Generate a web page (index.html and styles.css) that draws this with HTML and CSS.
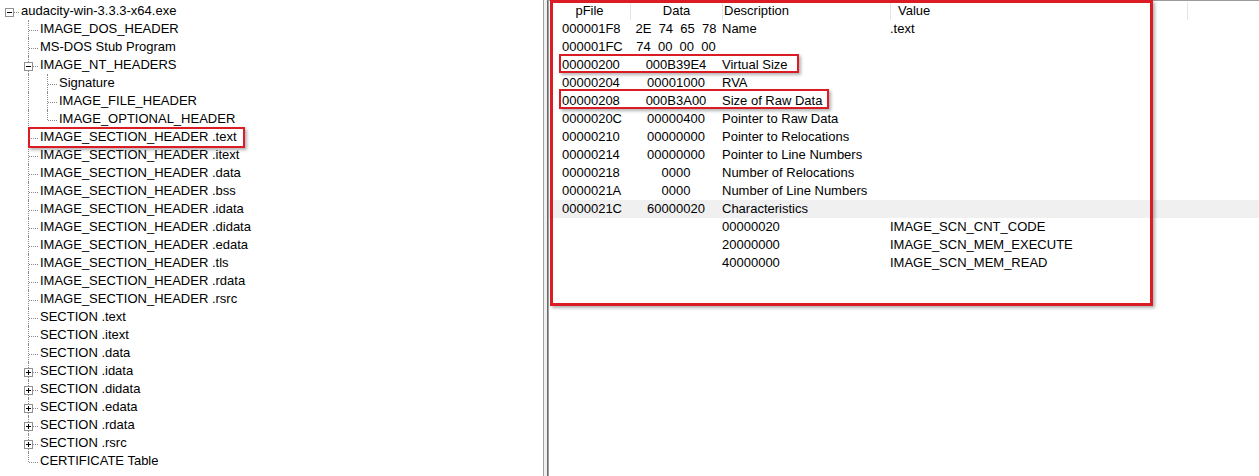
FILE: index.html
```html
<!DOCTYPE html>
<html>
<head>
<meta charset="utf-8">
<link rel="stylesheet" href="styles.css">
</head>
<body>
<div class="app">
  <div class="tree-pane">
    <div class="tree">
      <div class="row"><span class="conn root"><span class="box"></span></span><span class="label">audacity-win-3.3.3-x64.exe</span></div>
      <div class="row"><span class="ind"></span><span class="conn"></span><span class="label">IMAGE_DOS_HEADER</span></div>
      <div class="row"><span class="ind"></span><span class="conn"></span><span class="label">MS-DOS Stub Program</span></div>
      <div class="row"><span class="ind"></span><span class="conn"><span class="box"></span></span><span class="label">IMAGE_NT_HEADERS</span></div>
      <div class="row"><span class="ind"></span><span class="ind v"></span><span class="conn"></span><span class="label">Signature</span></div>
      <div class="row"><span class="ind"></span><span class="ind v"></span><span class="conn"></span><span class="label">IMAGE_FILE_HEADER</span></div>
      <div class="row"><span class="ind"></span><span class="ind v"></span><span class="conn last"></span><span class="label">IMAGE_OPTIONAL_HEADER</span></div>
      <div class="row"><span class="ind"></span><span class="conn"></span><span class="label">IMAGE_SECTION_HEADER .text</span></div>
      <div class="row"><span class="ind"></span><span class="conn"></span><span class="label">IMAGE_SECTION_HEADER .itext</span></div>
      <div class="row"><span class="ind"></span><span class="conn"></span><span class="label">IMAGE_SECTION_HEADER .data</span></div>
      <div class="row"><span class="ind"></span><span class="conn"></span><span class="label">IMAGE_SECTION_HEADER .bss</span></div>
      <div class="row"><span class="ind"></span><span class="conn"></span><span class="label">IMAGE_SECTION_HEADER .idata</span></div>
      <div class="row"><span class="ind"></span><span class="conn"></span><span class="label">IMAGE_SECTION_HEADER .didata</span></div>
      <div class="row"><span class="ind"></span><span class="conn"></span><span class="label">IMAGE_SECTION_HEADER .edata</span></div>
      <div class="row"><span class="ind"></span><span class="conn"></span><span class="label">IMAGE_SECTION_HEADER .tls</span></div>
      <div class="row"><span class="ind"></span><span class="conn"></span><span class="label">IMAGE_SECTION_HEADER .rdata</span></div>
      <div class="row"><span class="ind"></span><span class="conn"></span><span class="label">IMAGE_SECTION_HEADER .rsrc</span></div>
      <div class="row"><span class="ind"></span><span class="conn"></span><span class="label">SECTION .text</span></div>
      <div class="row"><span class="ind"></span><span class="conn"></span><span class="label">SECTION .itext</span></div>
      <div class="row"><span class="ind"></span><span class="conn"></span><span class="label">SECTION .data</span></div>
      <div class="row"><span class="ind"></span><span class="conn"><span class="box plus"></span></span><span class="label">SECTION .idata</span></div>
      <div class="row"><span class="ind"></span><span class="conn"><span class="box plus"></span></span><span class="label">SECTION .didata</span></div>
      <div class="row"><span class="ind"></span><span class="conn"><span class="box plus"></span></span><span class="label">SECTION .edata</span></div>
      <div class="row"><span class="ind"></span><span class="conn"><span class="box plus"></span></span><span class="label">SECTION .rdata</span></div>
      <div class="row"><span class="ind"></span><span class="conn"><span class="box plus"></span></span><span class="label">SECTION .rsrc</span></div>
      <div class="row"><span class="ind"></span><span class="conn last"></span><span class="label">CERTIFICATE Table</span></div>
    </div>
  </div>
  <div class="splitter"></div>
  <div class="list-pane">
    <div class="lrow head">
      <span class="c1">pFile</span><span class="c2">Data</span><span class="c3">Description</span><span class="c4">Value</span><span class="c5"></span>
    </div>
    <div class="lrow"><span class="c1">000001F8</span><span class="c2">2E  74  65  78</span><span class="c3">Name</span><span class="c4">.text</span></div>
    <div class="lrow"><span class="c1">000001FC</span><span class="c2">74  00  00  00</span><span class="c3"></span><span class="c4"></span></div>
    <div class="lrow"><span class="c1">00000200</span><span class="c2">000B39E4</span><span class="c3">Virtual Size</span><span class="c4"></span></div>
    <div class="lrow"><span class="c1">00000204</span><span class="c2">00001000</span><span class="c3">RVA</span><span class="c4"></span></div>
    <div class="lrow"><span class="c1">00000208</span><span class="c2">000B3A00</span><span class="c3">Size of Raw Data</span><span class="c4"></span></div>
    <div class="lrow"><span class="c1">0000020C</span><span class="c2">00000400</span><span class="c3">Pointer to Raw Data</span><span class="c4"></span></div>
    <div class="lrow"><span class="c1">00000210</span><span class="c2">00000000</span><span class="c3">Pointer to Relocations</span><span class="c4"></span></div>
    <div class="lrow"><span class="c1">00000214</span><span class="c2">00000000</span><span class="c3">Pointer to Line Numbers</span><span class="c4"></span></div>
    <div class="lrow"><span class="c1">00000218</span><span class="c2">0000</span><span class="c3">Number of Relocations</span><span class="c4"></span></div>
    <div class="lrow"><span class="c1">0000021A</span><span class="c2">0000</span><span class="c3">Number of Line Numbers</span><span class="c4"></span></div>
    <div class="lrow hl"><span class="c1">0000021C</span><span class="c2">60000020</span><span class="c3">Characteristics</span><span class="c4"></span></div>
    <div class="lrow"><span class="c1"></span><span class="c2"></span><span class="c3">00000020</span><span class="c4">IMAGE_SCN_CNT_CODE</span></div>
    <div class="lrow"><span class="c1"></span><span class="c2"></span><span class="c3">20000000</span><span class="c4">IMAGE_SCN_MEM_EXECUTE</span></div>
    <div class="lrow"><span class="c1"></span><span class="c2"></span><span class="c3">40000000</span><span class="c4">IMAGE_SCN_MEM_READ</span></div>
  </div>
  <div class="mark mark-tree"></div>
  <div class="mark mark-big"></div>
  <div class="mark mark-vsize"></div>
  <div class="mark mark-raw"></div>
</div>
</body>
</html>
```

FILE: styles.css
```css
html, body {
  margin: 0;
  padding: 0;
  background: #fff;
}
body {
  font-family: "Liberation Sans", Arial, sans-serif;
  font-size: 13px;
  color: #000;
  overflow: hidden;
}
.app {
  position: relative;
  display: flex;
  width: 1259px;
  height: 476px;
  overflow: hidden;
}

/* ---------- tree ---------- */
.tree-pane {
  width: 543px;
  flex: none;
  border-right: 1px solid #a0a0a0;
  background: #fff;
}
.tree {
  padding-top: 2px;
}
.row {
  display: flex;
  height: 18px;
  line-height: 18px;
  white-space: nowrap;
}
.ind, .conn {
  position: relative;
  width: 19px;
  flex: none;
}
.ind.v::before,
.conn::before {
  content: "";
  position: absolute;
  left: 9px;
  top: 0;
  height: 18px;
  border-left: 1px dotted #8a8a8a;
}
.conn::after {
  content: "";
  position: absolute;
  left: 10px;
  right: 0;
  top: 10px;
  border-top: 1px dotted #8a8a8a;
}
.conn.last::before {
  height: 10px;
}
.conn.root::before {
  display: none;
}
.box {
  position: absolute;
  left: 5px;
  top: 6px;
  width: 7px;
  height: 7px;
  border: 1px solid #919191;
  background: #fff;
  z-index: 1;
}
.box::before {
  content: "";
  position: absolute;
  left: 1px;
  top: 3px;
  width: 5px;
  height: 1px;
  background: #000;
}
.box.plus::after {
  content: "";
  position: absolute;
  left: 3px;
  top: 1px;
  width: 1px;
  height: 5px;
  background: #000;
}
.label {
  margin-left: 2px;
}

/* ---------- splitter ---------- */
.splitter {
  width: 3px;
  flex: none;
  background: #f0f0f0;
}

/* ---------- list ---------- */
.list-pane {
  flex: 1;
  border-left: 1px solid #696969;
  border-top: 1px solid #9a9a9a;
  box-shadow: inset 1px 0 0 #a0a0a0;
  padding-left: 1px;
  padding-top: 1px;
  background: #fff;
}
.lrow {
  display: grid;
  grid-template-columns: 81px 92px 168px 297px 1fr;
  height: 18px;
  line-height: 18px;
  white-space: pre;
}
.lrow.hl {
  background: #f0f0f0;
}
.c1 {
  padding-left: 13px;
}
.c2 {
  text-align: center;
}
.head .c1 {
  padding-left: 0;
  text-align: center;
}
.head .c2,
.head .c3,
.head .c4,
.head .c5 {
  border-left: 1px solid #e5e5e5;
}
.head .c3 {
  padding-left: 1px;
}
.head .c4 {
  padding-left: 7px;
}

/* ---------- annotation marks ---------- */
.mark {
  position: absolute;
  border: 2px solid #dc1c24;
  box-shadow: 2px 2px 3px rgba(0, 0, 0, 0.3);
  pointer-events: none;
}
.mark-tree {
  left: 28px;
  top: 127px;
  width: 213px;
  height: 17px;
}
.mark-big {
  left: 550px;
  top: 0;
  width: 597px;
  height: 300px;
  border-width: 3px;
}
.mark-vsize {
  left: 559px;
  top: 54px;
  width: 236px;
  height: 15px;
}
.mark-raw {
  left: 559px;
  top: 89px;
  width: 266px;
  height: 16px;
}
```
